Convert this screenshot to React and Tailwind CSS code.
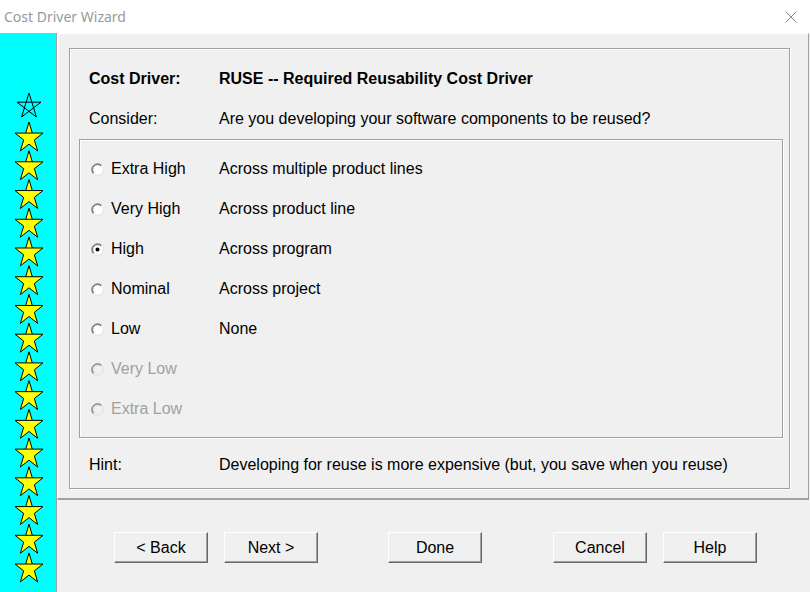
import React from "react";

const rows = [
  ["Extra High", "Across multiple product lines", false, false],
  ["Very High", "Across product line", false, false],
  ["High", "Across program", true, false],
  ["Nominal", "Across project", false, false],
  ["Low", "None", false, false],
  ["Very Low", "", false, true],
  ["Extra Low", "", false, true],
];

function Radio({ checked, disabled }) {
  return (
    <svg width="13" height="13" viewBox="0 0 13 13" className="shrink-0">
      <circle cx="6.5" cy="6.5" r="6" fill={disabled ? "#f0f0f0" : "#ffffff"} />
      <path d="M2.26 10.74 A6 6 0 0 1 10.74 2.26" fill="none" stroke="#808080" strokeWidth="1" />
      <path d="M3 10 A4.95 4.95 0 0 1 10 3" fill="none" stroke="#404040" strokeWidth="0.9" opacity={disabled ? 0.5 : 0.9} />
      <path d="M10.74 2.26 A6 6 0 0 1 2.26 10.74" fill="none" stroke="#e0e0e0" strokeWidth="1" />
      {checked && <circle cx="6.5" cy="6.5" r="2" fill="#000" />}
    </svg>
  );
}

function starPoints(cx, top, w, h) {
  const pts = [];
  const raw = [];
  for (let i = 0; i < 10; i++) {
    const a = (-90 + i * 36) * (Math.PI / 180);
    const rad = i % 2 === 0 ? 1 : 0.382;
    raw.push([Math.cos(a) * rad, Math.sin(a) * rad]);
  }
  const minY = -1;
  const maxY = Math.sin((54 * Math.PI) / 180);
  const sx = w / (2 * Math.cos((18 * Math.PI) / 180));
  const sy = h / (maxY - minY);
  for (const [x, y] of raw) {
    pts.push([cx + x * sx, top + (y - minY) * sy]);
  }
  return pts;
}

function Stars() {
  const stars = [];
  {
    const p = starPoints(29, 93 - 33, 24, 24);
    const outer = [p[0], p[4], p[8], p[2], p[6]];
    stars.push(
      <polygon
        key="o"
        points={outer.map((q) => q.join(",")).join(" ")}
        fill="none"
        stroke="#000"
        strokeWidth="1"
        strokeLinejoin="miter"
      />
    );
  }
  for (let i = 0; i < 16; i++) {
    const top = 122 + i * 28.73 - 33;
    const p = starPoints(29, top, 28, 29);
    stars.push(
      <g key={i}>
        <polygon
          points={p.map((q) => q.join(",")).join(" ")}
          fill="#ffff00"
          stroke="#000"
          strokeWidth="1"
          strokeLinejoin="miter"
        />
        <line x1={p[9][0]} y1={p[9][1]} x2={p[1][0]} y2={p[1][1]} stroke="#000" strokeWidth="1" />
      </g>
    );
  }
  return (
    <svg width="56" height="559" viewBox="0 0 56 559">
      {stars}
    </svg>
  );
}

function Button({ children }) {
  return (
    <div className="w-[94px] h-[31px] flex items-center justify-center bg-[#f0f0f0] border border-t-white border-l-white border-r-[#696969] border-b-[#696969] shadow-[inset_-1px_-1px_0_#a0a0a0] text-[16px] text-black">
      {children}
    </div>
  );
}

export default function App() {
  return (
    <div
      className="w-[810px] h-[592px] overflow-hidden bg-[#f0f0f0] text-black"
      style={{ fontFamily: '"Liberation Sans", Arial, sans-serif' }}
    >
      {/* Title bar */}
      <div className="h-[33px] bg-white flex items-center justify-between pl-[4px] pr-[13px]">
        <span
          className="text-[14px] text-[#999999] leading-none"
          style={{ fontFamily: '"Noto Sans", "Open Sans", sans-serif' }}
        >
          Cost Driver Wizard
        </span>
        <svg width="12" height="12" viewBox="0 0 12 12">
          <path d="M0.5 0.5 L11.5 11.5 M11.5 0.5 L0.5 11.5" stroke="#8a8a8a" strokeWidth="1" />
        </svg>
      </div>

      <div className="flex h-[559px]">
        {/* Star column */}
        <div className="w-[57px] h-full bg-[#00ffff] border-r border-[#a0a0a0] shrink-0">
          <Stars />
        </div>

        <div className="flex-1 flex flex-col">
          {/* Top panel */}
          <div className="h-[467px] mr-[1px] border-t border-l border-white border-r border-r-[#a0a0a0] border-b-2 border-b-[#a0a0a0] pl-[11px] pt-[14px]">
            <div className="w-[721px] h-[441px] border border-[#a0a0a0] shadow-[inset_1px_1px_0_#fff,1px_1px_0_#fff] pt-[9px] text-[16px]">
              <div className="h-[40px] pt-[2px] flex items-center pl-[19px] font-bold">
                <span className="w-[130px]">Cost Driver:</span>
                <span>RUSE -- Required Reusability Cost Driver</span>
              </div>
              <div className="h-[40px] pt-[2px] flex items-center pl-[19px]">
                <span className="w-[130px]">Consider:</span>
                <span>Are you developing your software components to be reused?</span>
              </div>
              <div className="ml-[9px] mt-[1px] w-[704px] border border-[#a0a0a0] shadow-[inset_1px_1px_0_#fff,1px_1px_0_#fff] pt-[8px] pb-[9px]">
                {rows.map(([label, desc, checked, disabled]) => (
                  <div key={label} className="h-[40px] pt-[2px] flex items-center pl-[11px]">
                    <Radio checked={checked} disabled={disabled} />
                    <span
                      className={
                        "ml-[7px] w-[108px] " + (disabled ? "text-[#a0a0a0]" : "text-black")
                      }
                    >
                      {label}
                    </span>
                    <span>{desc}</span>
                  </div>
                ))}
              </div>
              <div className="h-[40px] pt-[2px] mt-[6px] flex items-center pl-[19px]">
                <span className="w-[130px]">Hint:</span>
                <span>Developing for reuse is more expensive (but, you save when you reuse)</span>
              </div>
            </div>
          </div>

          {/* Buttons */}
          <div className="flex pt-[32px] pl-[57px]">
            <Button>&lt; Back</Button>
            <div className="ml-[16px]">
              <Button>Next &gt;</Button>
            </div>
            <div className="ml-[70px]">
              <Button>Done</Button>
            </div>
            <div className="ml-[71px]">
              <Button>Cancel</Button>
            </div>
            <div className="ml-[16px]">
              <Button>Help</Button>
            </div>
          </div>
        </div>
      </div>
    </div>
  );
}
